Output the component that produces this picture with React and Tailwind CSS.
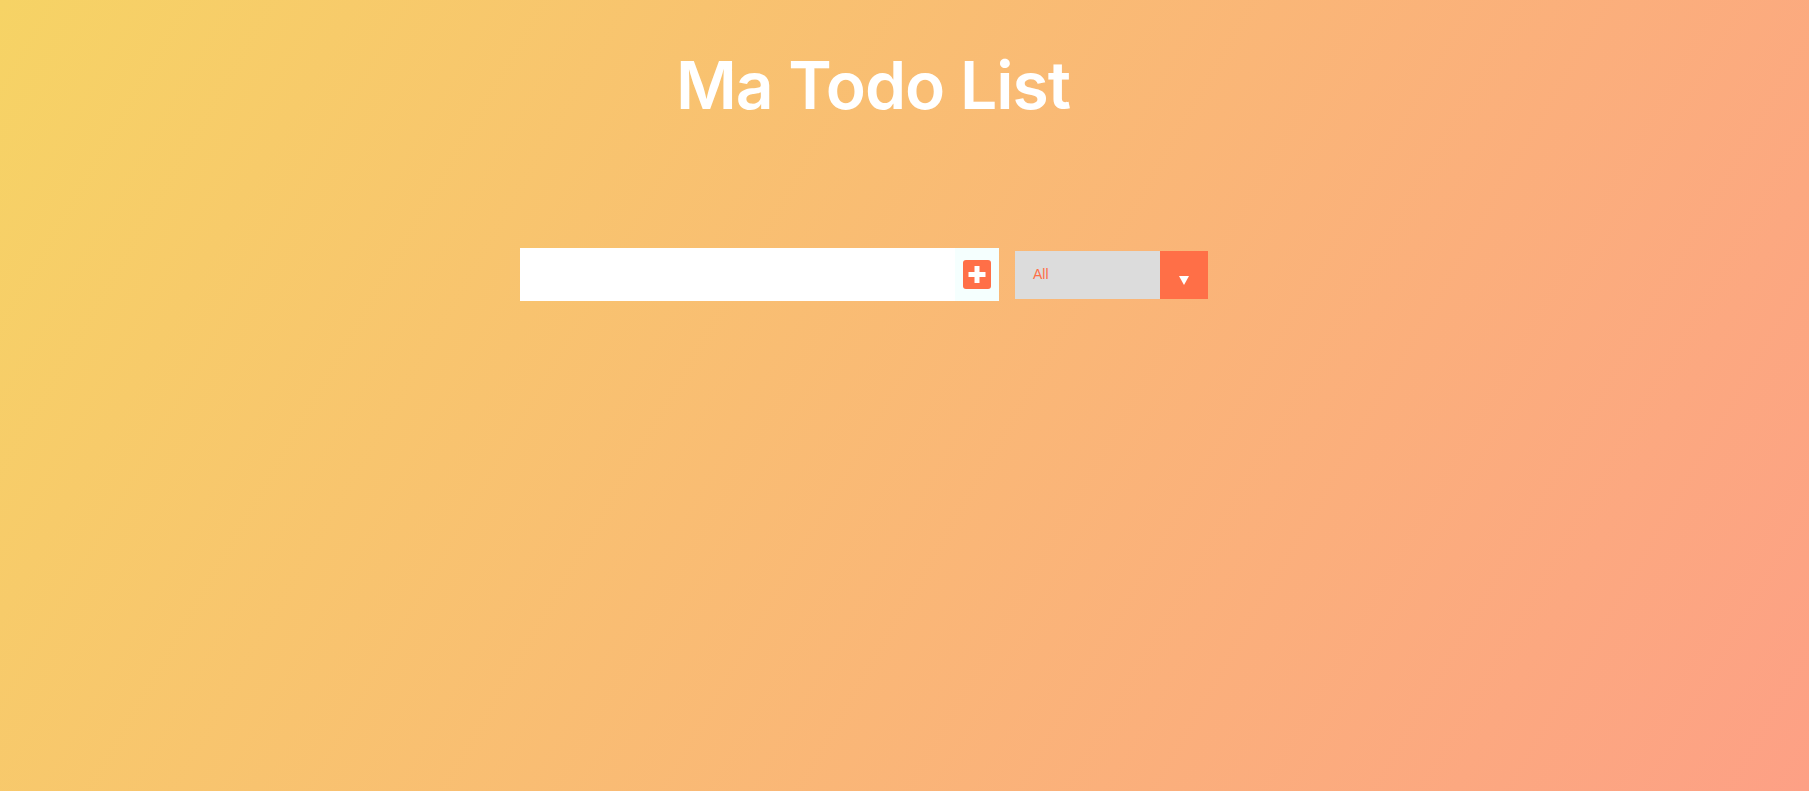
import React from 'react';

const App = () => {
    return (
        <div className="min-h-screen w-full bg-[linear-gradient(120deg,#f6d365,#fda085)] font-['Inter',sans-serif]">
            {/* Header */}
            <header className="flex justify-center pt-[52px] pr-[63px]">
                <h1 className="text-[66px] font-semibold leading-none text-white tracking-[-1px]">Ma Todo List</h1>
            </header>

            {/* Form */}
            <form className="mt-[130px] flex items-center justify-center pr-[81px]" onSubmit={(e) => e.preventDefault()}>
                <div className="flex h-[53px] w-[479px] bg-white">
                    <input type="text" className="min-w-0 flex-1 bg-white px-2 text-[32px] text-black outline-none" />
                    <button type="submit" className="flex w-[44px] items-center justify-center bg-[#f5fffe]">
                        <svg width="28" height="29" viewBox="0 0 28 29">
                            <rect x="0" y="0" width="28" height="29" rx="3" fill="#ff6f47" />
                            <path d="M11.5 6h5v6h6v5h-6v6h-5v-6h-6v-5h6z" fill="#ffffff" />
                        </svg>
                    </button>
                </div>

                <div className="ml-[16px] flex h-[48px] w-[193px]">
                    <div className="flex flex-1 items-center bg-[#dcdcdc] pl-[18px] font-['Liberation_Sans',sans-serif] text-[14px] text-[#ff6f47]">
                        All
                    </div>
                    <div className="flex w-[48px] justify-center bg-[#ff6f47] pt-[25px]">
                        <svg width="10" height="9" viewBox="0 0 10 9">
                            <path d="M0 0h10L5 9z" fill="#ffffff" />
                        </svg>
                    </div>
                </div>
            </form>
        </div>
    );
};

export default App;
